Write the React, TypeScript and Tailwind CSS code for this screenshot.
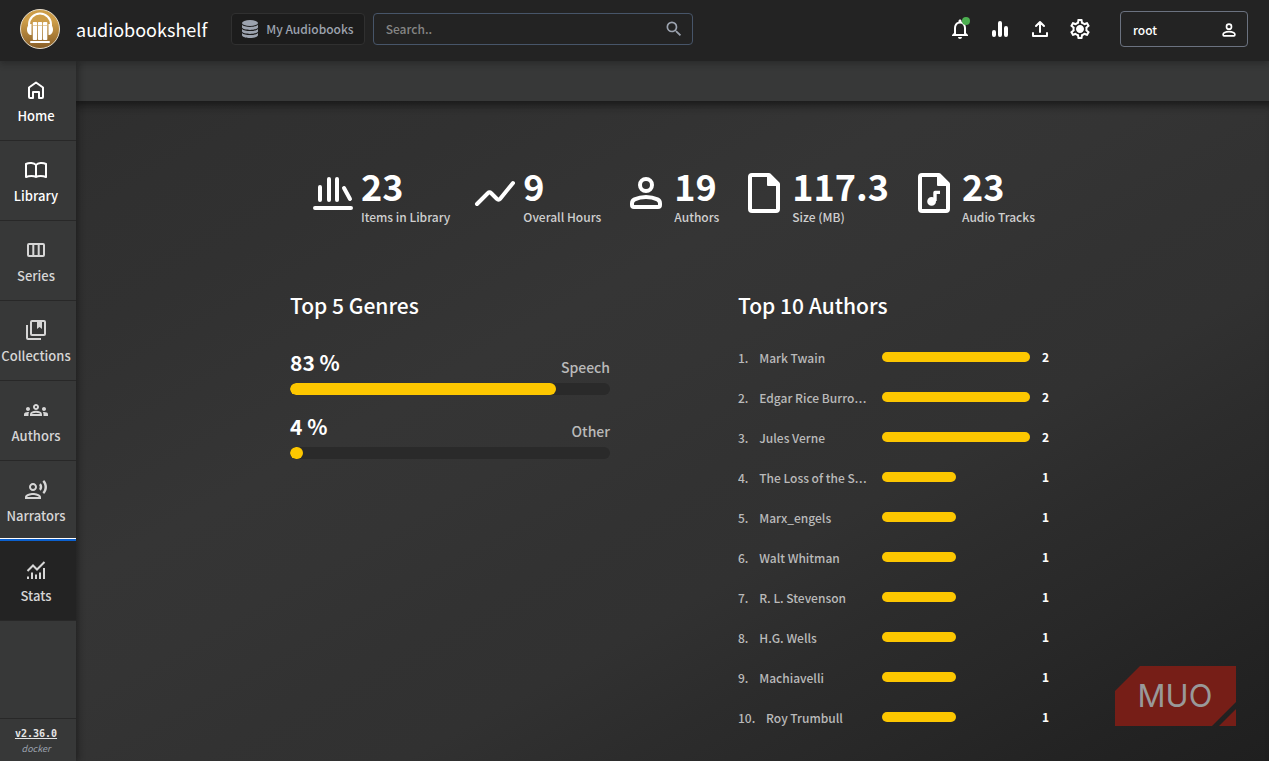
import React from 'react';
import {
  MdOutlineGroups,
  MdOutlineNotifications,
  MdOutlineRecordVoiceOver,
  MdOutlineSettings,
  MdSearch,
} from 'react-icons/md';

const genres = [
  { name: 'Speech', percent: 83 },
  { name: 'Other', percent: 4 },
];

const authors = [
  { name: 'Mark Twain', count: 2 },
  { name: 'Edgar Rice Burroughs', count: 2 },
  { name: 'Jules Verne', count: 2 },
  { name: 'The Loss of the Steamship', count: 1 },
  { name: 'Marx_engels', count: 1 },
  { name: 'Walt Whitman', count: 1 },
  { name: 'R. L. Stevenson', count: 1 },
  { name: 'H.G. Wells', count: 1 },
  { name: 'Machiavelli', count: 1 },
  { name: 'Roy Trumbull', count: 1 },
];

type IconProps = { className?: string; children?: React.ReactNode };

const LineIcon = ({ className = 'size-6', children }: IconProps) => (
  <svg
    viewBox="0 0 24 24"
    className={className}
    fill="none"
    stroke="currentColor"
    strokeWidth="2"
    strokeLinecap="round"
    strokeLinejoin="round"
    aria-hidden="true"
  >
    {children}
  </svg>
);

const PersonIcon = ({ className }: IconProps) => (
  <LineIcon className={className}>
    <circle cx="12" cy="8" r="3" />
    <path d="M5 17.200c0-.9.5-1.600 1.300-2C8 14.400 10 14 12 14s4 .4 5.700 1.200c.8.400 1.300 1.100 1.300 2V18a1 1 0 0 1-1 1H6a1 1 0 0 1-1-1z" />
  </LineIcon>
);

const FileIcon = ({ className, children }: IconProps) => (
  <LineIcon className={className}>
    <path d="M14.500 3H6a1 1 0 0 0-1 1v16a1 1 0 0 0 1 1h12a1 1 0 0 0 1-1V7.500z" />
    <path d="M14 3v5h5z" fill="currentColor" strokeWidth="1" />
    {children}
  </LineIcon>
);

const Logo = () => (
  <svg viewBox="0 0 40 40" className="size-10" role="img" aria-label="audiobookshelf logo">
    <defs>
      <linearGradient id="gold" x1="0" y1="0" x2="0" y2="1">
        <stop offset="0.3" stopColor="#cd9d49" />
        <stop offset="1" stopColor="#875d27" />
      </linearGradient>
    </defs>
    <circle cx="20" cy="20" r="19.500" fill="url(#gold)" stroke="#e5dccb" strokeWidth="1" />
    <path d="M9 18v-2.500a11 11 0 0 1 22 0V18" fill="none" stroke="#fff" strokeWidth="2" />
    <path d="M11.500 15v11c-2.500 0-4.500-2-4.500-5.500s2-5.500 4.500-5.500zM28.500 15v11c2.500 0 4.500-2 4.500-5.500s-2-5.500-4.500-5.500z" fill="#fff" />
    <g fill="#fff">
      <rect x="12.800" y="13" width="4.300" height="18" rx="0.800" />
      <rect x="17.900" y="13" width="4.300" height="18" rx="0.800" />
      <rect x="23" y="13" width="4.300" height="18" rx="0.800" />
      <rect x="10" y="32" width="20" height="2" rx="1" />
    </g>
    <path d="M13 16.500h4M18 16.500h4M23 16.500h4" stroke="#cd9d49" strokeWidth="0.500" />
  </svg>
);

const DatabaseIcon = () => (
  <svg viewBox="0 0 16 18" className="h-[18px] w-4" fill="currentColor" aria-hidden="true">
    <ellipse cx="8" cy="3" rx="8" ry="3" />
    <path d="M0 4.800c2 2.800 14 2.800 16 0v2.700c-1 3.200-15 3.200-16 0z" />
    <path d="M0 9c2 2.800 14 2.800 16 0v2.500c-1 3.200-15 3.200-16 0z" />
    <path d="M0 13c2 2.800 14 2.800 16 0v2.200c-1 3.700-15 3.700-16 0z" />
  </svg>
);

const navItems = [
  {
    label: 'Home',
    bright: true,
    icon: (
      <LineIcon>
        <path d="M5 9.500 12 4.500l7 5V19a1 1 0 0 1-1 1h-3v-6H9v6H6a1 1 0 0 1-1-1z" />
      </LineIcon>
    ),
  },
  {
    label: 'Library',
    bright: true,
    icon: (
      <LineIcon>
        <path d="M12 7C10 4.500 5 4.500 2 6v13c3-1.500 8-1.500 10 0 2-1.500 7-1.500 10 0V6c-3-1.500-8-1.500-10 1zM12 7v12" strokeLinecap="butt" />
      </LineIcon>
    ),
  },
  {
    label: 'Series',
    icon: (
      <LineIcon>
        <rect x="4" y="6" width="16" height="12" rx="1" />
        <path d="M9.300 6v12M14.700 6v12" />
      </LineIcon>
    ),
  },
  {
    label: 'Collections',
    icon: (
      <LineIcon>
        <rect x="7" y="3" width="14" height="14" rx="1" />
        <path d="M3 7v13a1 1 0 0 0 1 1h13" strokeLinecap="butt" />
        <path d="M13 3v8l2.500-2 2.500 2V3z" fill="currentColor" stroke="none" />
      </LineIcon>
    ),
  },
  { label: 'Authors', icon: <MdOutlineGroups className="size-6" /> },
  { label: 'Narrators', icon: <MdOutlineRecordVoiceOver className="size-6" /> },
  {
    label: 'Stats',
    active: true,
    icon: (
      <LineIcon>
        <path d="m3.500 13 5.500-5.500 4 4 7.500-7.500" strokeLinecap="butt" strokeLinejoin="miter" />
        <path d="M4 18.500V21M8 14.500V21M12 16.500V21M16 14.500V21M20 10v11" strokeLinecap="butt" />
      </LineIcon>
    ),
  },
];

const stats = [
  {
    value: '23',
    label: 'Items in Library',
    icon: (
      <LineIcon className="size-12">
        <path d="M3 19.500h18M5.500 9v6.500M10 5v10.500M14 5v10.500M17.500 9.500l3 5.500" />
      </LineIcon>
    ),
  },
  {
    value: '9',
    label: 'Overall Hours',
    icon: (
      <LineIcon className="size-12">
        <path d="m3 17.500 5.500-5.500a1 1 0 0 1 1.500 0l3 3a1 1 0 0 0 1.500 0L21 7" />
      </LineIcon>
    ),
  },
  { value: '19', label: 'Authors', icon: <PersonIcon className="size-12" /> },
  { value: '117.3', label: 'Size (MB)', icon: <FileIcon className="size-12" /> },
  {
    value: '23',
    label: 'Audio Tracks',
    icon: (
      <FileIcon className="size-12">
        <circle cx="10.800" cy="16.200" r="1.600" fill="currentColor" strokeWidth="1.200" />
        <path d="M12.500 16v-4.300h2.500" strokeLinecap="butt" strokeWidth="1.700" />
      </FileIcon>
    ),
  },
];

const Appbar = () => (
  <header className="z-20 flex h-[61px] shrink-0 items-center bg-[#232323] pr-[21px] pb-1 pl-5 shadow-[0_3px_6px_#11111155]">
    <Logo />
    <a href="#" className="ml-4 text-lg leading-6">audiobookshelf</a>
    <button className="ml-6 flex h-8 items-center gap-2 rounded border border-[#303030] bg-[#1c1c1c] px-2.5 text-xs font-medium text-[#9ca3af]">
      <DatabaseIcon />
      My Audiobooks
    </button>
    <form className="ml-2 flex h-8 w-80 items-center rounded border border-[#475569] pr-2 pl-3">
      <input
        type="text"
        aria-label="Search"
        placeholder="Search.."
        className="min-w-0 flex-1 bg-transparent text-xs font-medium outline-none placeholder:text-[#858585]"
      />
      <button type="button" aria-label="Submit search" className="text-[#9ca3af]">
        <MdSearch className="size-5" />
      </button>
    </form>
    <div className="ml-auto flex items-center gap-4">
      <button aria-label="Notifications" className="relative">
        <MdOutlineNotifications className="size-6" />
        <span className="absolute top-0 right-0.5 size-2 rounded-full bg-[#4caf50]" />
      </button>
      <a href="#" aria-label="Your stats">
        <LineIcon>
          <path d="M6 15v3M12 6v12M18 11v7" strokeWidth="4" />
        </LineIcon>
      </a>
      <a href="#" aria-label="Upload">
        <LineIcon>
          <path d="M12 15V6M8 9l4-4 4 4M5 16v3h14v-3" />
        </LineIcon>
      </a>
      <a href="#" aria-label="Settings" className="relative">
        <MdOutlineSettings className="size-6" />
        <span className="absolute inset-0 m-auto size-1.5 rounded-full bg-white" />
      </a>
      <button className="ml-3 flex h-9 w-32 items-center justify-between rounded border border-[#6b7280] pt-0.5 pr-2 pl-3 text-xs font-medium">
        root
        <PersonIcon className="size-5" />
      </button>
    </div>
  </header>
);

const SideRail = () => (
  <nav className="z-10 flex w-[76px] shrink-0 flex-col bg-[#373838] shadow-[3px_0_6px_#11111166]">
    {navItems.map((item) => (
      <a
        key={item.label}
        href="#"
        className={`relative flex h-20 flex-col items-center justify-center gap-1 border-b border-[#282828] pt-0.5 pr-1 text-[13px] leading-5 font-medium ${item.active ? 'bg-[#232323]' : ''} ${item.bright ? 'text-white' : 'text-[#d6d6d6]'}`}
      >
        {item.icon}
        <span className="whitespace-nowrap">{item.label}</span>
        {item.active && <span className="absolute inset-x-0 -top-[3px] h-[3px] border-t border-white bg-[#0b60ce]" />}
      </a>
    ))}
    <div className="mt-auto flex h-[43px] flex-col items-center border-t border-[#282828] pt-2 pr-1 text-[10px]">
      <a href="#" className="font-['DejaVu_Sans_Mono',monospace] leading-[14px] font-bold text-[#e5e5e5] underline">v2.36.0</a>
      <span className="text-[9px] leading-4 text-[#9ca3af] italic">docker</span>
    </div>
  </nav>
);

const StatsRow = () => (
  <div className="flex justify-center gap-[17px]">
    {stats.map((stat) => (
      <div key={stat.label} className="flex items-start gap-1 pr-1">
        <div className="pt-1">{stat.icon}</div>
        <div>
          <p className="text-4xl leading-10 font-bold">{stat.value}</p>
          <p className="mt-0.5 text-xs leading-5 font-medium text-[#cfcfcf]">{stat.label}</p>
        </div>
      </div>
    ))}
  </div>
);

const TopGenres = () => (
  <section className="w-80">
    <h2 className="mb-[26px] text-[21px] leading-8 font-medium">Top 5 Genres</h2>
    {genres.map((genre) => (
      <div key={genre.name} className="h-16">
        <div className="flex h-8 items-start justify-between">
          <p className="text-[21px] leading-[30px] font-bold">{genre.percent}&nbsp;%</p>
          <p className="self-end text-sm leading-6 font-medium text-[#bababa]">{genre.name}</p>
        </div>
        <div className="mt-1 h-3 overflow-hidden rounded-full bg-[#2a2a2a]">
          <div className="h-full rounded-full bg-[#fdc700]" style={{ width: `${genre.percent}%` }} />
        </div>
      </div>
    ))}
  </section>
);

// The CJK face centres its ellipsis, so the truncating box takes another family than its text.
const TopAuthors = () => (
  <section className="w-80">
    <h2 className="mb-[26px] text-[21px] leading-8 font-medium">Top 10 Authors</h2>
    <ol className="flex flex-col gap-5">
      {authors.map((author, i) => (
        <li key={author.name} className="flex h-5 items-center text-xs leading-5">
          <p className="w-36 truncate pr-3 font-['Open_Sans',sans-serif] text-base leading-5 text-[#bababa]">
            <span className="font-['Noto_Sans_CJK_SC',sans-serif] text-xs leading-5 font-medium">
              {i + 1}.&nbsp;&nbsp;&nbsp;&nbsp;{author.name}
            </span>
          </p>
          <div className="h-2.5 flex-1">
            <div className="h-full rounded-full bg-[#fdc700]" style={{ width: `${(author.count / 2) * 100}%` }} />
          </div>
          <p className="ml-3 w-4 font-bold">{author.count}</p>
        </li>
      ))}
    </ol>
  </section>
);

const Watermark = () => (
  <svg viewBox="0 0 121 60" className="absolute right-[33px] bottom-[35px] z-20 h-[60px] w-[121px]" role="img" aria-label="MUO">
    <path d="M25 0h96v36L97 60H0V25zM121 43v17h-17z" fill="#761e17" />
    <text x="60" y="41" textAnchor="middle" className="fill-[#999999] font-['Inter',sans-serif] text-[31px] font-normal">MUO</text>
  </svg>
);

const App = () => {
  return (
    <div className="relative flex min-h-screen flex-col bg-[#373838] font-['Noto_Sans_CJK_SC',sans-serif] text-white">
      <Appbar />
      <div className="flex flex-1">
        <SideRail />
        <div className="flex min-w-0 flex-1 flex-col">
          <div className="h-10 shrink-0 bg-[#373838]" />
          <main className="flex-1 bg-[linear-gradient(to_right_bottom,#2e2e2e,#303030,#313131,#333333,#353535,#343434,#323232,#313131,#2c2c2c,#282828,#232323,#1f1f1f)] pt-16 pl-[3px] shadow-[inset_0_10px_8px_-6px_#111111cc]">
            <div className="mx-auto max-w-3xl">
              <StatsRow />
              <div className="mt-[62px] flex flex-wrap justify-between gap-y-8">
                <TopGenres />
                <TopAuthors />
              </div>
            </div>
          </main>
        </div>
      </div>
      <Watermark />
    </div>
  );
};

export default App;
